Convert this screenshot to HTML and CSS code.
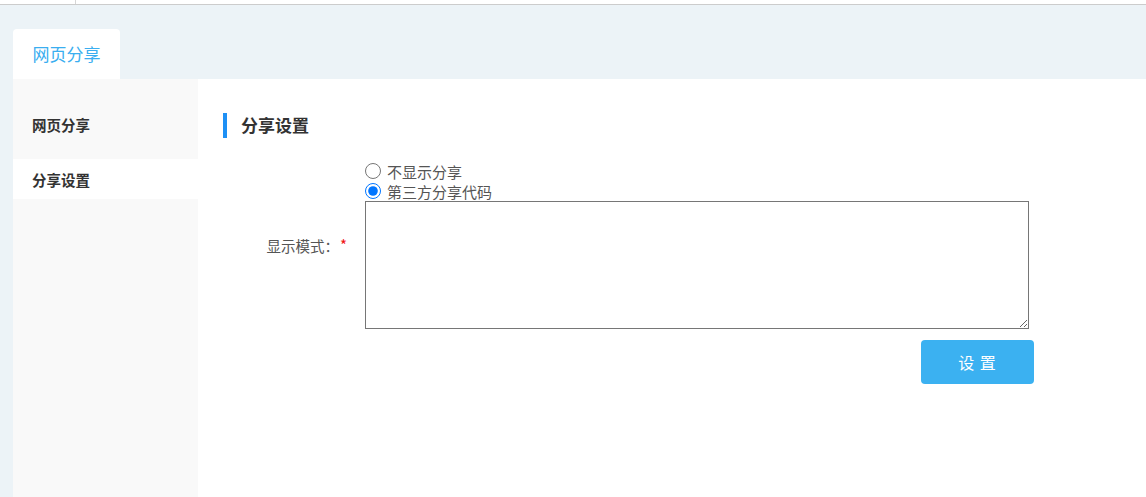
FILE: index.html
```html
<!DOCTYPE html>
<html lang="zh-CN">
<head>
<meta charset="utf-8">
<title>网页分享</title>
<link rel="stylesheet" href="styles.css">
</head>
<body>
<div class="topbar"><div class="topbar-cell"></div></div>
<div class="tabs">
  <div class="tab">网页分享</div>
</div>
<div class="content">
  <aside class="sidebar">
    <div class="side-item side-head">网页分享</div>
    <div class="side-item active">分享设置</div>
  </aside>
  <main class="main">
    <h2 class="section-title">分享设置</h2>
    <div class="form-row">
      <div class="form-label">显示模式：<span class="req">*</span></div>
      <div class="form-field">
        <label class="radio-row"><input type="radio" name="mode">不显示分享</label>
        <label class="radio-row"><input type="radio" name="mode" checked>第三方分享代码</label>
        <textarea class="code-area"></textarea>
      </div>
    </div>
    <div class="btn-row">
      <button class="btn-primary">设 置</button>
    </div>
  </main>
</div>
</body>
</html>
```
FILE: styles.css
```css
html, body {
  margin: 0;
  padding: 0;
}
body {
  background: #ecf3f7;
  font-family: "Noto Sans CJK SC", "Noto Sans", sans-serif;
  color: #333;
  height: 497px;
  overflow: hidden;
}
.topbar {
  height: 4px;
  background: #fff;
  border-bottom: 1px solid #cccccc;
  display: flex;
}
.topbar-cell {
  width: 75px;
  border-right: 1px solid #d6d6d6;
}
.tabs {
  padding: 24px 0 0 13px;
  display: flex;
}
.tab {
  width: 107px;
  height: 50px;
  background: #fff;
  border-radius: 4px 4px 0 0;
  color: #3aaef0;
  font-size: 17px;
  line-height: 50px;
  text-align: center;
}
.content {
  margin-left: 13px;
  display: flex;
  height: 418px;
}
.sidebar {
  width: 185px;
  background: #f9f9f9;
  padding-top: 25px;
  box-sizing: border-box;
}
.side-item {
  height: 40px;
  line-height: 40px;
  padding-left: 19px;
  font-size: 14.5px;
  font-weight: bold;
  color: #333;
}
.side-head {
  margin-bottom: 15px;
  line-height: 42px;
}
.side-item.active {
  background: #fff;
  line-height: 42px;
}
.main {
  flex: 1;
  background: #fff;
  padding-top: 34px;
}
.section-title {
  margin: 0 0 23px 25px;
  height: 25px;
  line-height: 24px;
  border-left: 4px solid #1e90f5;
  padding-left: 14px;
  font-size: 17px;
  font-weight: bold;
  color: #333;
}
.form-row {
  display: flex;
  align-items: center;
}
.form-label {
  width: 152px;
  text-align: right;
  font-size: 14.5px;
  color: #555;
  box-sizing: border-box;
  padding-right: 3px;
}
.req {
  color: #f01010;
  font-size: 15px;
  margin-left: 1px;
  position: relative;
  top: -1px;
}
.form-field {
  margin-left: 15px;
  display: flex;
  flex-direction: column;
}
.radio-row {
  display: flex;
  align-items: center;
  height: 20px;
  font-size: 15px;
  color: #555;
}
.radio-row input {
  margin: 0 6px 0 0;
  width: 16px;
  height: 16px;
}
.code-area {
  width: 664px;
  height: 128px;
  box-sizing: border-box;
  border: 1px solid #767676;
  margin: 0;
  display: block;
}
.btn-row {
  margin: 11px 0 0 723px;
}
.btn-primary {
  width: 113px;
  height: 44px;
  border: 0;
  border-radius: 4px;
  background: #3bb1f1;
  color: #fff;
  font-family: "Noto Sans CJK SC", sans-serif;
  font-size: 16px;
  letter-spacing: 1px;
}
```
